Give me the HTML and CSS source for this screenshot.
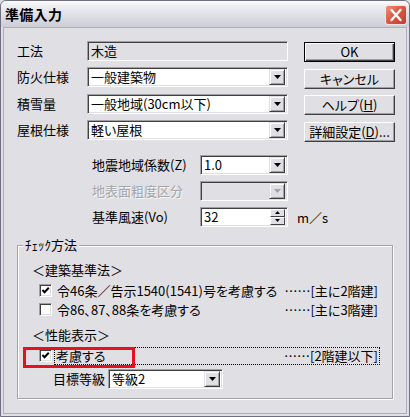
FILE: index.html
```html
<!DOCTYPE html>
<html lang="ja">
<head>
<meta charset="utf-8">
<title>準備入力</title>
<link rel="stylesheet" href="styles.css">
</head>
<body>
<div class="window">
  <div class="titlebar">
    <span class="title">準備入力</span>
    <span class="close">
      <svg width="20" height="18" viewBox="0 0 20 18"><path d="M5.5 4 L14.5 14 M14.5 4 L5.5 14" stroke="#fff" stroke-width="2.4" stroke-linecap="round" fill="none"/></svg>
    </span>
  </div>
  <div class="body">
    <div class="top">
      <div class="form">
        <span class="lbl">工法</span>
        <div class="field ro">木造</div>
        <span class="lbl">防火仕様</span>
        <div class="combo"><span class="val">一般建築物</span><span class="dd"><svg width="7" height="4" viewBox="0 0 7 4"><path d="M0 0H7L3.5 4Z" fill="#000"/></svg></span></div>
        <span class="lbl">積雪量</span>
        <div class="combo"><span class="val">一般地域(30cm以下)</span><span class="dd"><svg width="7" height="4" viewBox="0 0 7 4"><path d="M0 0H7L3.5 4Z" fill="#000"/></svg></span></div>
        <span class="lbl">屋根仕様</span>
        <div class="combo"><span class="val">軽い屋根</span><span class="dd"><svg width="7" height="4" viewBox="0 0 7 4"><path d="M0 0H7L3.5 4Z" fill="#000"/></svg></span></div>
      </div>
      <div class="buttons">
        <div class="btn default">OK</div>
        <div class="btn">キャンセル</div>
        <div class="btn">ヘルプ(<u>H</u>)</div>
        <div class="btn">詳細設定(<u>D</u>)...</div>
      </div>
    </div>

    <div class="wind">
      <span class="lbl">地震地域係数(Z)</span>
      <div class="combo"><span class="val">1.0</span><span class="dd"><svg width="7" height="4" viewBox="0 0 7 4"><path d="M0 0H7L3.5 4Z" fill="#000"/></svg></span></div>
      <span></span>
      <span class="lbl disabled">地表面粗度区分</span>
      <div class="combo off"><span class="val"></span><span class="dd"><svg width="7" height="4" viewBox="0 0 7 4"><path d="M0 0H7L3.5 4Z" fill="#a3a2a8"/></svg></span></div>
      <span></span>
      <span class="lbl">基準風速(Vo)</span>
      <div class="combo spin"><span class="val">32</span>
        <span class="spinbtns">
          <span class="sb"><svg width="5" height="3" viewBox="0 0 5 3"><path d="M0 3H5L2.5 0Z" fill="#000"/></svg></span>
          <span class="sb"><svg width="5" height="3" viewBox="0 0 5 3"><path d="M0 0H5L2.5 3Z" fill="#000"/></svg></span>
        </span>
      </div>
      <span class="unit">m／s</span>
    </div>

    <div class="group">
      <span class="legend">ﾁｪｯｸ方法</span>
      <div class="sec">＜建築基準法＞</div>
      <div class="crow r1">
        <span class="cb"><svg width="9" height="9" viewBox="0 0 9 9"><path d="M1.5 4 L3.5 6.3 L7.8 1.8" stroke="#000" stroke-width="2" fill="none"/></svg></span>
        <span class="ctext">令46条／告示1540(1541)号を考慮する</span>
        <span class="note">……[主に2階建]</span>
      </div>
      <div class="crow r2">
        <span class="cb"></span>
        <span class="ctext">令86、87、88条を考慮する</span>
        <span class="note">……[主に3階建]</span>
      </div>
      <div class="sec s2">＜性能表示＞</div>
      <div class="crow r3">
        <span class="cb"><svg width="9" height="9" viewBox="0 0 9 9"><path d="M1.5 4 L3.5 6.3 L7.8 1.8" stroke="#000" stroke-width="2" fill="none"/></svg></span>
        <span class="focus"><span>考慮する</span><span class="note">……[2階建以下]</span></span>
      </div>
      <div class="target">
        <span class="lbl">目標等級</span>
        <div class="combo"><span class="val">等級2</span><span class="dd"><svg width="7" height="4" viewBox="0 0 7 4"><path d="M0 0H7L3.5 4Z" fill="#000"/></svg></span></div>
      </div>
      <span class="mark"></span>
    </div>
  </div>
</div>
</body>
</html>
```

FILE: styles.css
```css
html, body {
  margin: 0;
  padding: 0;
  background: #e0dfe3;
}

.window {
  width: 410px;
  height: 417px;
  box-sizing: border-box;
  border: 1px solid #6f6f82;
  border-radius: 6px 6px 0 0;
  background: #e0dfe3;
  font-family: "Noto Sans CJK JP", "Noto Sans", sans-serif;
  font-size: 13px;
  line-height: 16px;
  color: #000;
  font-feature-settings: "palt";
  display: flex;
  flex-direction: column;
  overflow: hidden;
}

.titlebar {
  height: 26px;
  flex: none;
  display: flex;
  align-items: center;
  justify-content: space-between;
  padding: 0 2px 0 4px;
  background: linear-gradient(#fbfbfc 0%, #ececf0 25%, #dcdce3 60%, #cdcdd6 100%);
  border-radius: 5px 5px 0 0;
}

.title {
  font-weight: bold;
  font-size: 14px;
  letter-spacing: 0.3px;
  font-feature-settings: normal;
}

.close {
  width: 22px;
  height: 20px;
  box-sizing: border-box;
  border: 1px solid #f3e3e0;
  border-radius: 3px;
  background: linear-gradient(135deg, #ee8f7c 0%, #dc5a45 45%, #c23c2c 100%);
  display: flex;
  align-items: center;
  justify-content: center;
  margin-top: 1px;
}

.body {
  flex: 1;
  margin: 0 2px 2px;
  border: 1px solid #aeadba;
  padding: 13px 0 0 13px;
}

.top {
  display: flex;
  align-items: flex-start;
}

.form {
  display: grid;
  grid-template-columns: 70px 201px;
  grid-auto-rows: 20px;
  row-gap: 6.33px;
  align-items: center;
}

.lbl {
  white-space: nowrap;
  font-feature-settings: normal;
}

.lbl.disabled {
  color: #a5a4aa;
  text-shadow: 1px 1px 0 #f6f6f8;
}

.field,
.combo {
  height: 20px;
  box-sizing: border-box;
  display: flex;
  align-items: center;
  background: #fff;
  border: 1px solid;
  border-color: #a0a0a4 #fff #fff #a0a0a4;
  box-shadow: inset 1px 1px 0 #404040, inset -1px -1px 0 #e0dfe3;
  padding: 0 2px 0 3px;
  white-space: nowrap;
  overflow: hidden;
}

.field.ro {
  background: #e0dfe3;
}

.combo.off {
  background: #e0dfe3;
}

.val {
  flex: 1;
}

.dd {
  width: 16px;
  height: 16px;
  flex: none;
  box-sizing: border-box;
  background: #e0dfe3;
  border: 1px solid;
  border-color: #e0dfe3 #404040 #404040 #e0dfe3;
  box-shadow: inset 1px 1px 0 #fff, inset -1px -1px 0 #a0a0a4;
  display: flex;
  align-items: center;
  justify-content: center;
}

.buttons {
  margin-left: 16px;
  width: 91px;
  padding-top: 1px;
  display: flex;
  flex-direction: column;
  gap: 6.67px;
}

.btn {
  height: 20px;
  box-sizing: border-box;
  background: #e0dfe3;
  border: 1px solid;
  border-color: #fff #404040 #404040 #fff;
  box-shadow: inset -1px -1px 0 #a0a0a4;
  display: flex;
  align-items: center;
  justify-content: center;
  white-space: nowrap;
}

.btn.default {
  border-color: #000;
  box-shadow: inset 1px 1px 0 #fff, inset -1px -1px 0 #404040, inset -2px -2px 0 #a0a0a4;
}

.btn u {
  text-decoration: underline;
  text-underline-offset: 1px;
}

.wind {
  margin-top: 13px;
  padding-left: 75px;
  display: grid;
  grid-template-columns: 108px 88px auto;
  grid-auto-rows: 20px;
  row-gap: 6px;
  align-items: center;
}

.spin {
  padding-right: 2px;
}

.spinbtns {
  display: flex;
  flex-direction: column;
  width: 15px;
  height: 16px;
}

.sb {
  flex: 1;
  box-sizing: border-box;
  background: #e0dfe3;
  border: 1px solid;
  border-color: #fff #404040 #404040 #fff;
  display: flex;
  align-items: center;
  justify-content: center;
}

.unit {
  margin-left: 9px;
  padding-top: 3px;
  font-feature-settings: normal;
}

.group {
  position: relative;
  margin-top: 18px;
  width: 376px;
  height: 154px;
  box-sizing: border-box;
  border: 1px solid #a4a3ab;
  box-shadow: inset 1px 1px 0 #fff, 1px 1px 0 #fff;
  padding: 16px 14px 0 14px;
}

.legend {
  position: absolute;
  top: -9px;
  left: 5px;
  padding: 0 2px;
  background: #e0dfe3;
}

.sec {
  height: 16px;
  font-feature-settings: normal;
}

.sec.s2 {
  margin-top: 9px;
}

.crow {
  display: flex;
  align-items: center;
  height: 16px;
  padding-left: 7px;
  white-space: nowrap;
}

.crow.r1 { margin-top: 5px; }
.crow.r2 { margin-top: 3px; }
.crow.r3 { margin-top: 4px; height: 18px; }

.cb {
  width: 13px;
  height: 13px;
  flex: none;
  box-sizing: border-box;
  background: #fff;
  border: 1px solid;
  border-color: #a0a0a4 #fff #fff #a0a0a4;
  box-shadow: inset 1px 1px 0 #404040, inset -1px -1px 0 #e0dfe3;
  display: flex;
  align-items: center;
  justify-content: center;
}

.ctext {
  margin-left: 5px;
}

.note {
  margin-left: auto;
}

.focus {
  flex: 1;
  height: 18px;
  box-sizing: border-box;
  margin-left: 2px;
  margin-right: -2px;
  border: 1px dotted #000;
  padding: 0 1px 0 1px;
  display: flex;
  align-items: center;
}

.target {
  margin-top: 4px;
  padding-left: 21px;
  display: flex;
  align-items: center;
}

.target .combo {
  margin-left: 3px;
  width: 115px;
}

.mark {
  position: absolute;
  left: 5px;
  top: 101px;
  width: 112px;
  height: 21px;
  box-sizing: border-box;
  border: 3px solid #e3121c;
}
```
